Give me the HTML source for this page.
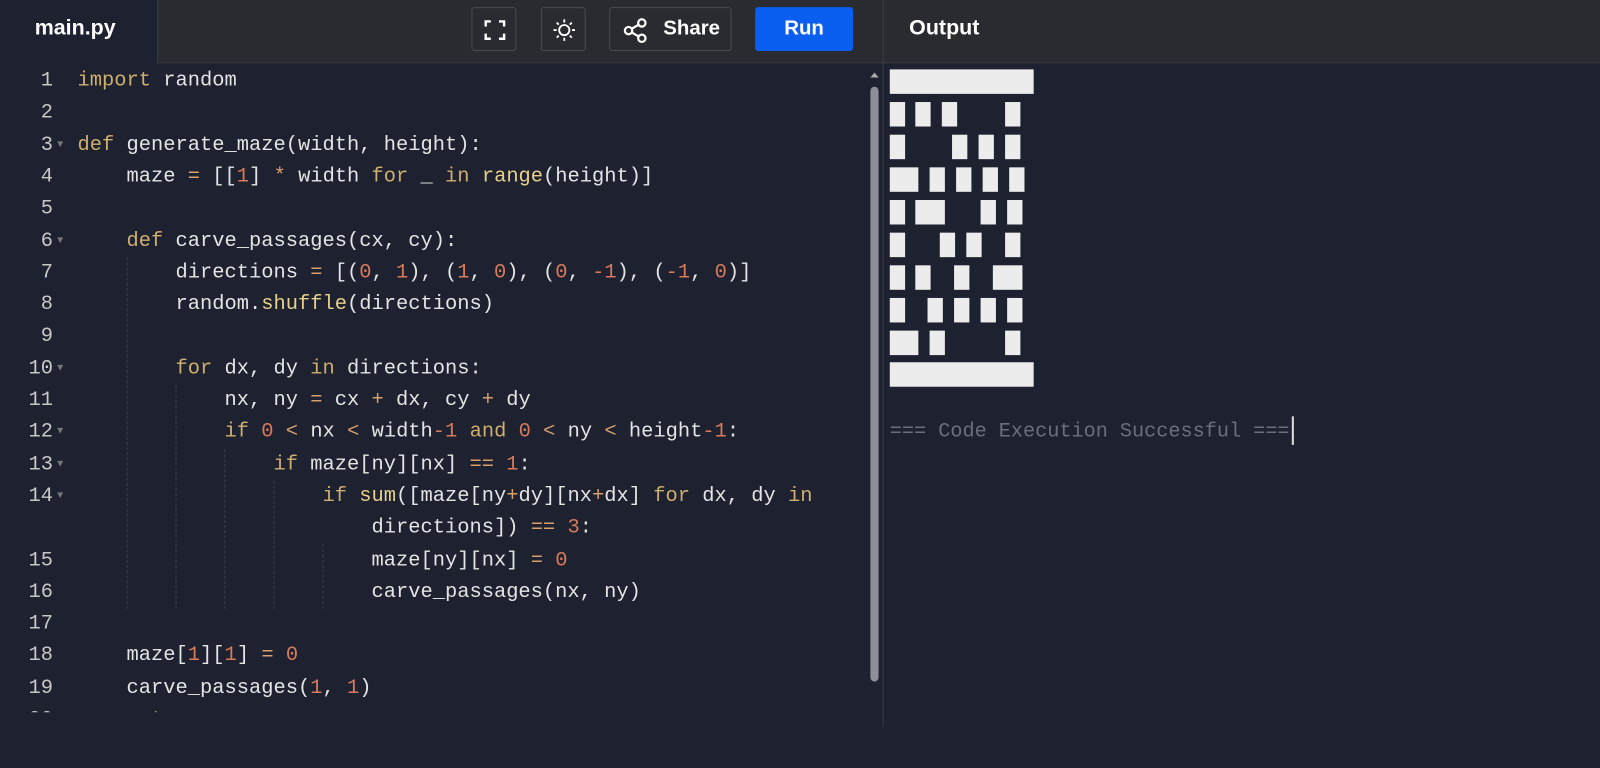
<!DOCTYPE html>
<html><head><meta charset="utf-8"><style>
*{margin:0;padding:0;box-sizing:border-box}
body{width:1600px;height:712px;background:#1d2130;position:relative;overflow:hidden;font-family:"Liberation Sans",sans-serif}
#w{position:absolute;left:0;top:0;width:1568px;height:698px;transform:scale(1.0204);transform-origin:0 0}
.hdr{position:absolute;left:0;top:0;width:1600px;height:62px;background:#2a2b31;border-bottom:1px solid #3c3d44}
.tab{position:absolute;left:0;top:0;width:155px;height:63px;background:#1d2130;border-right:1px solid #3c3d44;color:#fff;font-weight:bold;font-size:21px;padding:16px 0 0 34px}
.btn{position:absolute;top:7px;height:43px;border:1px solid #4a4b52;border-radius:3px;background:#2a2b31;color:#fff;font-weight:bold;font-size:20px}
.run{background:#0a5ef0;border-color:#0a5ef0;text-align:center;line-height:41px}
.out{position:absolute;left:891px;top:16px;color:#fff;font-weight:bold;font-size:21px}
.div{position:absolute;left:865px;top:0;width:1px;height:712px;background:#3c3d44}
.code{position:absolute;left:0;top:64px;font-family:"Liberation Mono",monospace;font-size:20px;line-height:31.3px;color:#e4e4e4;white-space:pre}
.ln{position:absolute;left:0;width:52px;text-align:right;color:#c8c8c8}
.fold{position:absolute;left:56px;color:#777;font-size:10px}
.tx{position:absolute;left:76px}
.k{color:#d0ae6e}.f{color:#e8d08a}.n{color:#d8795a}.o{color:#d8a06a}
.g{position:absolute;width:0;border-left:1px dashed #3a3f50}
.b{position:absolute;background:#ececec}
.msg{position:absolute;left:872px;top:412px;font-family:"Liberation Mono",monospace;font-size:19.8px;color:#6a6f7e;white-space:pre}
</style></head><body><div id="w">
<div class="hdr"></div>
<div class="tab">main.py</div>
<div class="btn" style="left:462px;width:44px"><svg width="44" height="43" viewBox="0 0 44 43"><path d="M13 18v-5h5M26 13h5v5M31 25v5h-5M18 30h-5v-5" fill="none" stroke="#fff" stroke-width="2.4"/></svg></div>
<div class="btn" style="left:530px;width:44px"><svg width="44" height="43" viewBox="0 0 44 43"><circle cx="22" cy="21.5" r="5" fill="none" stroke="#fff" stroke-width="1.8"/><path d="M22 11v3M22 29v3M11.5 21.5h3M29.5 21.5h3M14.6 14.1l2 2M27.4 26.9l2 2M29.4 14.1l-2 2M16.6 26.9l-2 2" stroke="#fff" stroke-width="1.8"/></svg></div>
<div class="btn" style="left:597px;width:120px"><svg style="position:absolute;left:12px;top:9px" width="26" height="26" viewBox="0 0 26 26"><circle cx="6" cy="13" r="3.6" fill="none" stroke="#fff" stroke-width="2.2"/><circle cx="19" cy="5.5" r="3.6" fill="none" stroke="#fff" stroke-width="2.2"/><circle cx="19" cy="20.5" r="3.6" fill="none" stroke="#fff" stroke-width="2.2"/><path d="M9 11.2l7-4M9 14.8l7 4" stroke="#fff" stroke-width="2.2"/></svg><span style="position:absolute;left:52px;top:9px">Share</span></div>
<div class="btn run" style="left:740px;width:96px">Run</div>
<div class="out">Output</div>
<div class="div"></div>
<div style="position:absolute;left:853px;top:85px;width:8px;height:583px;background:#8c8f98;border-radius:4px"></div>
<div style="position:absolute;left:853px;top:71px;width:0;height:0;border-left:4px solid transparent;border-right:4px solid transparent;border-bottom:5px solid #aaa"></div>

<div class="g" style="left:124px;top:252px;height:345px"></div>
<div class="g" style="left:172px;top:377px;height:220px"></div>
<div class="g" style="left:220px;top:440px;height:157px"></div>
<div class="g" style="left:268px;top:471px;height:126px"></div>
<div class="g" style="left:316px;top:533px;height:64px"></div>

<div class="code">
<div class="ln" style="top:0">1</div><div class="tx" style="top:0"><span class="k">import</span> random</div>
<div class="ln" style="top:31.3px">2</div>
<div class="ln" style="top:62.6px">3</div><div class="fold" style="top:62.6px">▼</div><div class="tx" style="top:62.6px"><span class="k">def</span> generate_maze(width, height):</div>
<div class="ln" style="top:93.9px">4</div><div class="tx" style="top:93.9px">    maze <span class="o">=</span> [[<span class="n">1</span>] <span class="o">*</span> width <span class="k">for</span> _ <span class="k">in</span> <span class="f">range</span>(height)]</div>
<div class="ln" style="top:125.2px">5</div>
<div class="ln" style="top:156.5px">6</div><div class="fold" style="top:156.5px">▼</div><div class="tx" style="top:156.5px">    <span class="k">def</span> carve_passages(cx, cy):</div>
<div class="ln" style="top:187.8px">7</div><div class="tx" style="top:187.8px">        directions <span class="o">=</span> [(<span class="n">0</span>, <span class="n">1</span>), (<span class="n">1</span>, <span class="n">0</span>), (<span class="n">0</span>, <span class="n">-1</span>), (<span class="n">-1</span>, <span class="n">0</span>)]</div>
<div class="ln" style="top:219.1px">8</div><div class="tx" style="top:219.1px">        random.<span class="f">shuffle</span>(directions)</div>
<div class="ln" style="top:250.4px">9</div>
<div class="ln" style="top:281.7px">10</div><div class="fold" style="top:281.7px">▼</div><div class="tx" style="top:281.7px">        <span class="k">for</span> dx, dy <span class="k">in</span> directions:</div>
<div class="ln" style="top:313px">11</div><div class="tx" style="top:313px">            nx, ny <span class="o">=</span> cx <span class="o">+</span> dx, cy <span class="o">+</span> dy</div>
<div class="ln" style="top:344.3px">12</div><div class="fold" style="top:344.3px">▼</div><div class="tx" style="top:344.3px">            <span class="k">if</span> <span class="n">0</span> <span class="o">&lt;</span> nx <span class="o">&lt;</span> width<span class="n">-1</span> <span class="k">and</span> <span class="n">0</span> <span class="o">&lt;</span> ny <span class="o">&lt;</span> height<span class="n">-1</span>:</div>
<div class="ln" style="top:375.6px">13</div><div class="fold" style="top:375.6px">▼</div><div class="tx" style="top:375.6px">                <span class="k">if</span> maze[ny][nx] <span class="o">==</span> <span class="n">1</span>:</div>
<div class="ln" style="top:406.9px">14</div><div class="fold" style="top:406.9px">▼</div><div class="tx" style="top:406.9px">                    <span class="k">if</span> <span class="f">sum</span>([maze[ny<span class="o">+</span>dy][nx<span class="o">+</span>dx] <span class="k">for</span> dx, dy <span class="k">in</span></div>
<div class="tx" style="top:438.2px">                        directions]) <span class="o">==</span> <span class="n">3</span>:</div>
<div class="ln" style="top:469.5px">15</div><div class="tx" style="top:469.5px">                        maze[ny][nx] <span class="o">=</span> <span class="n">0</span></div>
<div class="ln" style="top:500.8px">16</div><div class="tx" style="top:500.8px">                        carve_passages(nx, ny)</div>
<div class="ln" style="top:532.1px">17</div>
<div class="ln" style="top:563.4px">18</div><div class="tx" style="top:563.4px">    maze[<span class="n">1</span>][<span class="n">1</span>] <span class="o">=</span> <span class="n">0</span></div>
<div class="ln" style="top:594.7px">19</div><div class="tx" style="top:594.7px">    carve_passages(<span class="n">1</span>, <span class="n">1</span>)</div>
<div class="ln" style="top:626px">20</div><div class="tx" style="top:626px">    <span class="k">return</span> maze</div>
</div>
<div style="position:absolute;left:0;top:698px;width:852px;height:14px;background:#1d2130"></div>

<div class="b" style="left:872px;top:68px;width:141px;height:24px"></div>
<div class="b" style="left:872px;top:100px;width:15px;height:24px"></div><div class="b" style="left:897px;top:100px;width:15px;height:24px"></div><div class="b" style="left:923px;top:100px;width:15px;height:24px"></div><div class="b" style="left:985px;top:100px;width:15px;height:24px"></div>
<div class="b" style="left:872px;top:132px;width:15px;height:24px"></div><div class="b" style="left:933px;top:132px;width:15px;height:24px"></div><div class="b" style="left:959px;top:132px;width:15px;height:24px"></div><div class="b" style="left:985px;top:132px;width:15px;height:24px"></div>
<div class="b" style="left:872px;top:164px;width:28px;height:24px"></div><div class="b" style="left:911px;top:164px;width:15px;height:24px"></div><div class="b" style="left:937px;top:164px;width:15px;height:24px"></div><div class="b" style="left:963px;top:164px;width:15px;height:24px"></div><div class="b" style="left:989px;top:164px;width:15px;height:24px"></div>
<div class="b" style="left:872px;top:196px;width:15px;height:24px"></div><div class="b" style="left:897px;top:196px;width:29px;height:24px"></div><div class="b" style="left:961px;top:196px;width:15px;height:24px"></div><div class="b" style="left:987px;top:196px;width:15px;height:24px"></div>
<div class="b" style="left:872px;top:228px;width:15px;height:24px"></div><div class="b" style="left:921px;top:228px;width:15px;height:24px"></div><div class="b" style="left:947px;top:228px;width:15px;height:24px"></div><div class="b" style="left:985px;top:228px;width:15px;height:24px"></div>
<div class="b" style="left:872px;top:260px;width:15px;height:24px"></div><div class="b" style="left:897px;top:260px;width:15px;height:24px"></div><div class="b" style="left:935px;top:260px;width:15px;height:24px"></div><div class="b" style="left:973px;top:260px;width:29px;height:24px"></div>
<div class="b" style="left:872px;top:292px;width:15px;height:24px"></div><div class="b" style="left:909px;top:292px;width:15px;height:24px"></div><div class="b" style="left:935px;top:292px;width:15px;height:24px"></div><div class="b" style="left:961px;top:292px;width:15px;height:24px"></div><div class="b" style="left:987px;top:292px;width:15px;height:24px"></div>
<div class="b" style="left:872px;top:324px;width:28px;height:24px"></div><div class="b" style="left:911px;top:324px;width:15px;height:24px"></div><div class="b" style="left:985px;top:324px;width:15px;height:24px"></div>
<div class="b" style="left:872px;top:355px;width:141px;height:24px"></div>
<div class="msg">=== Code Execution Successful ===</div>
<div style="position:absolute;left:1266px;top:408px;width:2px;height:28px;background:#ddd"></div>
</div></body></html>
